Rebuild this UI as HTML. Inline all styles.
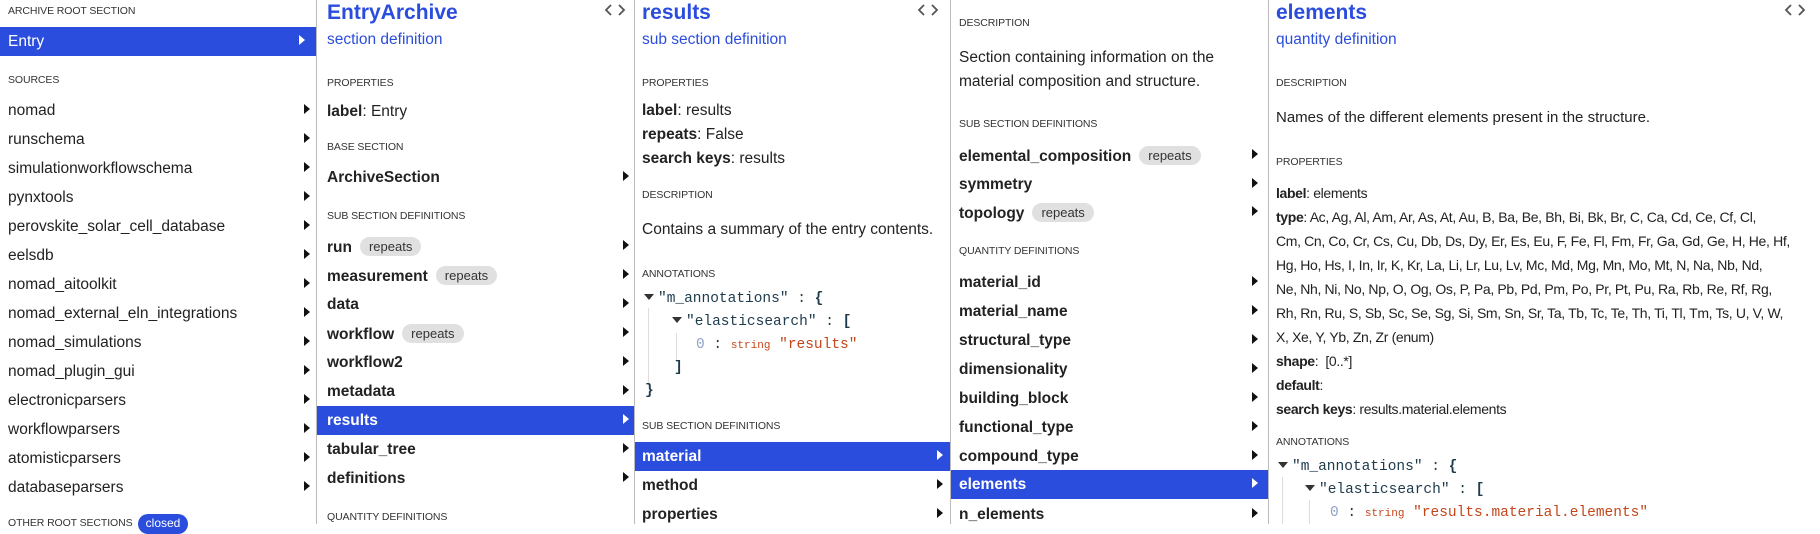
<!DOCTYPE html>
<html><head><meta charset="utf-8"><style>
*{margin:0;padding:0;box-sizing:border-box}
body{width:1820px;height:524px;overflow:hidden;background:#fff;font-family:"Liberation Sans",sans-serif;color:#222;position:relative}
.a{position:absolute;white-space:nowrap}
.h{font-size:10.5px;color:#333;line-height:14px;text-transform:uppercase;letter-spacing:-0.1px}
.t{font-size:15.5px;line-height:20px}
.b{font-weight:bold}
.sel{position:absolute;background:#2b4ddd}
.w{color:#fff}
.ar{position:absolute;width:0;height:0;border-top:5px solid transparent;border-bottom:5px solid transparent;border-left:6px solid #111}
.ar.wt{border-left-color:#fff}
.vl{position:absolute;top:0;width:1px;height:524px;background:#bbb}
.chip{display:inline-block;background:#e0e0e0;border-radius:10px;font-size:13px;font-weight:normal;color:#333;padding:0 9px;line-height:19px;margin-left:8px;vertical-align:1px}
.ti{font-size:21px;font-weight:bold;color:#2b4ddd;line-height:26px}
.st{font-size:15.5px;color:#2b4ddd;line-height:20px}
.mono{font-family:"Liberation Mono",monospace;font-size:14.5px;line-height:20px;color:#1e3b4c}
.str{color:#c4461b}
.sl{font-size:11px;color:#c4461b}
.idx{color:#8fa3c9}
.tri{display:inline-block;width:0;height:0;border-left:5px solid transparent;border-right:5px solid transparent;border-top:6px solid #333;margin-right:4px;vertical-align:2px}
.gl{position:absolute;width:1px;background:#ddd}
.ic{position:absolute}
</style></head><body>
<div class="vl" style="left:316px"></div>
<div class="vl" style="left:634px"></div>
<div class="vl" style="left:950px"></div>
<div class="vl" style="left:1268px"></div>

<!-- COL 1 -->
<div class="a h" style="left:8px;top:4px">Archive root section</div>
<div class="sel" style="left:0;top:27px;width:316px;height:29px"></div>
<div class="a t w" style="left:8px;top:32px">Entry</div>
<div class="ar wt" style="left:299px;top:35px"></div>
<div class="a h" style="left:8px;top:73px">Sources</div>
<div class="a t" style="left:8px;top:101px">nomad</div><div class="ar" style="left:304px;top:104px"></div>
<div class="a t" style="left:8px;top:130px">runschema</div><div class="ar" style="left:304px;top:133px"></div>
<div class="a t" style="left:8px;top:159px">simulationworkflowschema</div><div class="ar" style="left:304px;top:162px"></div>
<div class="a t" style="left:8px;top:188px">pynxtools</div><div class="ar" style="left:304px;top:191px"></div>
<div class="a t" style="left:8px;top:217px">perovskite_solar_cell_database</div><div class="ar" style="left:304px;top:220px"></div>
<div class="a t" style="left:8px;top:246px">eelsdb</div><div class="ar" style="left:304px;top:249px"></div>
<div class="a t" style="left:8px;top:275px">nomad_aitoolkit</div><div class="ar" style="left:304px;top:278px"></div>
<div class="a t" style="left:8px;top:304px">nomad_external_eln_integrations</div><div class="ar" style="left:304px;top:307px"></div>
<div class="a t" style="left:8px;top:333px">nomad_simulations</div><div class="ar" style="left:304px;top:336px"></div>
<div class="a t" style="left:8px;top:362px">nomad_plugin_gui</div><div class="ar" style="left:304px;top:365px"></div>
<div class="a t" style="left:8px;top:391px">electronicparsers</div><div class="ar" style="left:304px;top:394px"></div>
<div class="a t" style="left:8px;top:420px">workflowparsers</div><div class="ar" style="left:304px;top:423px"></div>
<div class="a t" style="left:8px;top:449px">atomisticparsers</div><div class="ar" style="left:304px;top:452px"></div>
<div class="a t" style="left:8px;top:478px">databaseparsers</div><div class="ar" style="left:304px;top:481px"></div>
<div class="a h" style="left:8px;top:516px">Other root sections</div>
<div class="a" style="left:138px;top:514px;width:50px;height:20px;border-radius:10px;background:#2b4ddd;color:#fff;font-size:12px;text-align:center;line-height:18px">closed</div>

<!-- COL 2 -->
<div class="a ti" style="left:327px;top:0px">EntryArchive</div>
<svg class="ic" style="left:604px;top:3px" width="22" height="14" viewBox="0 0 22 14"><path d="M7 2 L2 7 L7 12 M15 2 L20 7 L15 12" fill="none" stroke="#555" stroke-width="1.8"/></svg>
<div class="a st" style="left:327px;top:30px">section definition</div>
<div class="a h" style="left:327px;top:76px">Properties</div>
<div class="a t" style="left:327px;top:102px"><b>label</b>: Entry</div>
<div class="a h" style="left:327px;top:140px">Base section</div>
<div class="a t b" style="left:327px;top:168px">ArchiveSection</div><div class="ar" style="left:623px;top:171px"></div>
<div class="a h" style="left:327px;top:209px">Sub section definitions</div>
<div class="a t b" style="left:327px;top:237px">run<span class="chip">repeats</span></div><div class="ar" style="left:623px;top:240px"></div>
<div class="a t b" style="left:327px;top:266px">measurement<span class="chip">repeats</span></div><div class="ar" style="left:623px;top:269px"></div>
<div class="a t b" style="left:327px;top:295px">data</div><div class="ar" style="left:623px;top:298px"></div>
<div class="a t b" style="left:327px;top:324px">workflow<span class="chip">repeats</span></div><div class="ar" style="left:623px;top:327px"></div>
<div class="a t b" style="left:327px;top:353px">workflow2</div><div class="ar" style="left:623px;top:356px"></div>
<div class="a t b" style="left:327px;top:382px">metadata</div><div class="ar" style="left:623px;top:385px"></div>
<div class="sel" style="left:317px;top:406px;width:317px;height:29px"></div>
<div class="a t b w" style="left:327px;top:411px">results</div><div class="ar wt" style="left:623px;top:414px"></div>
<div class="a t b" style="left:327px;top:440px">tabular_tree</div><div class="ar" style="left:623px;top:443px"></div>
<div class="a t b" style="left:327px;top:469px">definitions</div><div class="ar" style="left:623px;top:472px"></div>
<div class="a h" style="left:327px;top:510px">Quantity definitions</div>

<!-- COL 3 -->
<div class="a ti" style="left:642px;top:0px">results</div>
<svg class="ic" style="left:917px;top:3px" width="22" height="14" viewBox="0 0 22 14"><path d="M7 2 L2 7 L7 12 M15 2 L20 7 L15 12" fill="none" stroke="#555" stroke-width="1.8"/></svg>
<div class="a st" style="left:642px;top:30px">sub section definition</div>
<div class="a h" style="left:642px;top:76px">Properties</div>
<div class="a t" style="left:642px;top:101px"><b>label</b>: results</div>
<div class="a t" style="left:642px;top:125px"><b>repeats</b>: False</div>
<div class="a t" style="left:642px;top:149px"><b>search keys</b>: results</div>
<div class="a h" style="left:642px;top:188px">Description</div>
<div class="a t" style="left:642px;top:220px">Contains a summary of the entry contents.</div>
<div class="a h" style="left:642px;top:267px">Annotations</div>
<div class="gl" style="left:648px;top:308px;height:76px"></div>
<div class="gl" style="left:676px;top:333px;height:28px"></div>
<div class="a mono" style="left:644px;top:289px"><span class="tri"></span>"m_annotations" : <b>{</b></div>
<div class="a mono" style="left:672px;top:312px"><span class="tri"></span>"elasticsearch" : <b>[</b></div>
<div class="a mono" style="left:696px;top:335px"><span class="idx">0</span> : <span class="sl">string</span> <span class="str">"results"</span></div>
<div class="a mono" style="left:674px;top:358px"><b>]</b></div>
<div class="a mono" style="left:645px;top:381px"><b>}</b></div>
<div class="a h" style="left:642px;top:419px">Sub section definitions</div>
<div class="sel" style="left:635px;top:442px;width:315px;height:29px"></div>
<div class="a t b w" style="left:642px;top:447px">material</div><div class="ar wt" style="left:937px;top:450px"></div>
<div class="a t b" style="left:642px;top:476px">method</div><div class="ar" style="left:937px;top:479px"></div>
<div class="a t b" style="left:642px;top:505px">properties</div><div class="ar" style="left:937px;top:508px"></div>

<!-- COL 4 -->
<div class="a h" style="left:959px;top:16px">Description</div>
<div class="a t" style="left:959px;top:48px">Section containing information on the</div>
<div class="a t" style="left:959px;top:72px">material composition and structure.</div>
<div class="a h" style="left:959px;top:117px">Sub section definitions</div>
<div class="a t b" style="left:959px;top:146px">elemental_composition<span class="chip">repeats</span></div><div class="ar" style="left:1252px;top:149px"></div>
<div class="a t b" style="left:959px;top:175px">symmetry</div><div class="ar" style="left:1252px;top:178px"></div>
<div class="a t b" style="left:959px;top:203px">topology<span class="chip">repeats</span></div><div class="ar" style="left:1252px;top:206px"></div>
<div class="a h" style="left:959px;top:244px">Quantity definitions</div>
<div class="a t b" style="left:959px;top:273px">material_id</div><div class="ar" style="left:1252px;top:276px"></div>
<div class="a t b" style="left:959px;top:302px">material_name</div><div class="ar" style="left:1252px;top:305px"></div>
<div class="a t b" style="left:959px;top:331px">structural_type</div><div class="ar" style="left:1252px;top:334px"></div>
<div class="a t b" style="left:959px;top:360px">dimensionality</div><div class="ar" style="left:1252px;top:363px"></div>
<div class="a t b" style="left:959px;top:389px">building_block</div><div class="ar" style="left:1252px;top:392px"></div>
<div class="a t b" style="left:959px;top:418px">functional_type</div><div class="ar" style="left:1252px;top:421px"></div>
<div class="a t b" style="left:959px;top:447px">compound_type</div><div class="ar" style="left:1252px;top:450px"></div>
<div class="sel" style="left:951px;top:470px;width:317px;height:29px"></div>
<div class="a t b w" style="left:959px;top:475px">elements</div><div class="ar wt" style="left:1252px;top:478px"></div>
<div class="a t b" style="left:959px;top:505px">n_elements</div><div class="ar" style="left:1252px;top:508px"></div>

<!-- COL 5 -->
<div class="a ti" style="left:1276px;top:0px">elements</div>
<svg class="ic" style="left:1784px;top:3px" width="22" height="14" viewBox="0 0 22 14"><path d="M7 2 L2 7 L7 12 M15 2 L20 7 L15 12" fill="none" stroke="#555" stroke-width="1.8"/></svg>
<div class="a st" style="left:1276px;top:30px">quantity definition</div>
<div class="a h" style="left:1276px;top:76px">Description</div>
<div class="a t" style="left:1276px;top:108px;font-size:15px">Names of the different elements present in the structure.</div>
<div class="a h" style="left:1276px;top:155px">Properties</div>
<div class="a t" style="left:1276px;top:181px;font-size:14px;line-height:24px;letter-spacing:-0.35px">
<b>label</b>: elements<br>
<b>type</b>: Ac, Ag, Al, Am, Ar, As, At, Au, B, Ba, Be, Bh, Bi, Bk, Br, C, Ca, Cd, Ce, Cf, Cl,<br>
Cm, Cn, Co, Cr, Cs, Cu, Db, Ds, Dy, Er, Es, Eu, F, Fe, Fl, Fm, Fr, Ga, Gd, Ge, H, He, Hf,<br>
Hg, Ho, Hs, I, In, Ir, K, Kr, La, Li, Lr, Lu, Lv, Mc, Md, Mg, Mn, Mo, Mt, N, Na, Nb, Nd,<br>
Ne, Nh, Ni, No, Np, O, Og, Os, P, Pa, Pb, Pd, Pm, Po, Pr, Pt, Pu, Ra, Rb, Re, Rf, Rg,<br>
Rh, Rn, Ru, S, Sb, Sc, Se, Sg, Si, Sm, Sn, Sr, Ta, Tb, Tc, Te, Th, Ti, Tl, Tm, Ts, U, V, W,<br>
X, Xe, Y, Yb, Zn, Zr (enum)<br>
<b>shape</b>: &nbsp;[0..*]<br>
<b>default</b>:<br>
<b>search keys</b>: results.material.elements
</div>
<div class="a h" style="left:1276px;top:435px">Annotations</div>
<div class="gl" style="left:1282px;top:477px;height:47px"></div>
<div class="gl" style="left:1309px;top:500px;height:24px"></div>
<div class="a mono" style="left:1278px;top:457px"><span class="tri"></span>"m_annotations" : <b>{</b></div>
<div class="a mono" style="left:1305px;top:480px"><span class="tri"></span>"elasticsearch" : <b>[</b></div>
<div class="a mono" style="left:1330px;top:503px"><span class="idx">0</span> : <span class="sl">string</span> <span class="str">"results.material.elements"</span></div>
</body></html>
